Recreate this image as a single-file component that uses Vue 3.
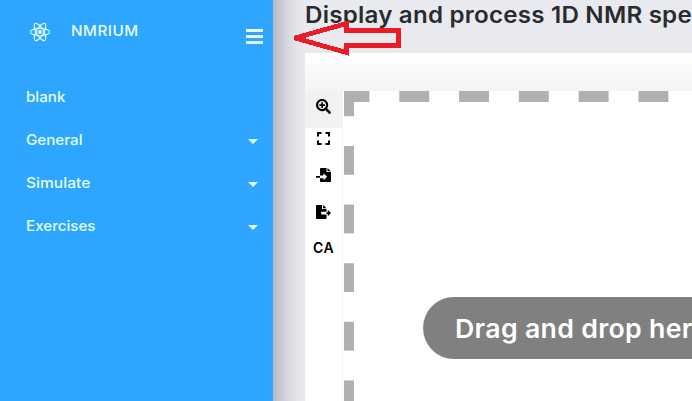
<script setup>
const menu = [
  { label: 'blank', key: 'blank', open: false },
  { label: 'General', key: 'general', open: true },
  { label: 'Simulate', key: 'simulate', open: true },
  { label: 'Exercises', key: 'exercises', open: true },
]
</script>

<template>
  <div class="page">
    <aside class="sidebar">
      <header class="brand">
        <svg class="logo" viewBox="0 0 22 20" fill="none" stroke="#dcfbff" stroke-width="1.15">
          <ellipse cx="11" cy="10" rx="9.7" ry="3.7" />
          <ellipse cx="11" cy="10" rx="9.7" ry="3.7" transform="rotate(60 11 10)" />
          <ellipse cx="11" cy="10" rx="9.7" ry="3.7" transform="rotate(120 11 10)" />
          <circle cx="11" cy="10" r="2" fill="#dcfbff" stroke="none" />
        </svg>
        <span class="name">NMRIUM</span>
        <span class="burger"><i></i><i></i><i></i></span>
      </header>
      <nav class="menu">
        <a v-for="m in menu" :key="m.key" class="item">
          <span class="label" :class="m.key">{{ m.label }}</span>
          <svg v-if="m.open" class="caret" viewBox="0 0 10 5"><path d="M0 0h10L5 5z" fill="#e6fdff" /></svg>
        </a>
      </nav>
    </aside>

    <main class="main">
      <h1 class="title">Display and process 1D NMR spe</h1>
      <section class="panel">
        <div class="bar"></div>
        <div class="work">
          <div class="tools">
            <span class="tool active">
              <svg width="15" height="15" viewBox="0 0 512 512"><path d="M304 192v32c0 6.6-5.4 12-12 12h-56v56c0 6.6-5.4 12-12 12h-32c-6.6 0-12-5.4-12-12v-56h-56c-6.6 0-12-5.4-12-12v-32c0-6.6 5.4-12 12-12h56v-56c0-6.6 5.4-12 12-12h32c6.6 0 12 5.4 12 12v56h56c6.6 0 12 5.4 12 12zm201 284.7L476.7 505c-9.4 9.4-24.6 9.4-33.9 0L343 405.3c-4.5-4.5-7-10.6-7-17V372c-35.3 27.6-79.7 44-128 44C93.1 416 0 322.9 0 208S93.1 0 208 0s208 93.1 208 208c0 48.3-16.4 92.7-44 128h16.3c6.4 0 12.5 2.5 17 7l99.7 99.7c9.3 9.4 9.3 24.6 0 34zM344 208c0-75.2-60.8-136-136-136S72 132.8 72 208s60.8 136 136 136 136-60.8 136-136z" /></svg>
            </span>
            <span class="tool expand">
              <svg width="13" height="13" viewBox="0 0 13 13"><path d="M0 4.5V.7Q0 0 .7 0H4.5V2H2V4.5zM8.5 0h3.8q.7 0 .7.7V4.5H11V2H8.5zM0 8.5H2V11H4.5v2H.7Q0 13 0 12.3zM11 8.5h2v3.8q0 .7-.7.7H8.5V11H11z" /></svg>
            </span>
            <span class="tool">
              <svg width="15" height="14" viewBox="0 0 15 14">
                <path d="M5 0h5.5v4H15v9.200q0 .8-.8.800H4.800Q4 14 4 13.200V10.200H7.500V12.300L11.200 8.700 7.500 5.200V7.500H4V1Q4 0 5 0zM11.500 0 15 3.300H11.500zM0 8h4v1.700H0z" />
                <path d="M4 8h4v1.700H4z" fill="#fff" />
              </svg>
            </span>
            <span class="tool">
              <svg width="15" height="14" viewBox="0 0 15 14">
                <path d="M.8 0H6v4h4.500v2.700H5.200v2.800h5.300v3.700q0 .8-.8.800H.8Q0 14 0 13.200V.8Q0 0 .8 0zM7 0l3.500 3.300H7zM10.500 7.300h1.300V4.900L15 8.100l-3.200 3.200V8.900h-1.300z" />
              </svg>
            </span>
            <span class="tool ca">CA</span>
          </div>
          <div class="drop">
            <div class="pill"><span class="pill-text">Drag and drop her</span></div>
          </div>
        </div>
      </section>
    </main>

    <svg class="arrow" viewBox="292 5 112 64"><path d="M295 38 346.500 23.500V30.500H398.700V45.300H346.500V52.500z" fill="none" stroke="#ed1c24" stroke-width="4.800" stroke-linejoin="miter" stroke-miterlimit="2" shape-rendering="crispEdges" /></svg>
  </div>
</template>

<style>
body { overflow: hidden; }
</style>

<style scoped>
.page {
  position: relative;
  display: flex;
  width: 692px;
  height: 401px;
  overflow: hidden;
  background: #e9eaef;
  font-family: Inter, "Liberation Sans", sans-serif;
}
.sidebar {
  flex: 0 0 273px;
  background: #2ea6ff;
  color: #e4fdff;
}
.brand {
  display: flex;
  align-items: flex-start;
  height: 76px;
  padding: 22px 10px 0 29px;
  box-sizing: border-box;
}
.logo { width: 22px; height: 20px; }
.name {
  margin: 0 auto 0 20px;
  font-size: 14.5px;
  line-height: 18px;
  font-weight: 550;
  letter-spacing: 0.5px;
  transform-origin: left;
  transform: scaleX(1.05);
}
.burger {
  display: flex;
  flex-direction: column;
  gap: 3px;
  padding-top: 7px;
}
.burger i { width: 17px; height: 3px; background: #e2faff; }
.menu { padding: 0 15px 0 26px; }
.item {
  display: flex;
  align-items: center;
  justify-content: space-between;
  height: 42.8px;
}
.label {
  margin-top: -1px;
  font-size: 14.5px;
  font-weight: 550;
  white-space: nowrap;
  transform-origin: left;
  transform: scaleX(1.045);
}
.simulate { transform: scaleX(1.075); }
.caret { width: 10px; height: 5px; margin-top: 3px; }
.main {
  flex: 1;
  min-width: 0;
  padding-left: 32px;
  background: linear-gradient(90deg, #b6b6bf 0, #c7c7cf 7px, #dadbe1 16px, #e6e7ec 26px, #e9eaef 34px);
}
.title {
  margin: 0;
  height: 53px;
  font-size: 22.5px;
  line-height: 30px;
  font-weight: 600;
  white-space: nowrap;
  color: #292b2e;
  letter-spacing: 0.2px;
  transform-origin: left;
  transform: scaleX(1.073);
}
.panel { background: #fff; height: 348px; display: flex; flex-direction: column; }
.bar { height: 38px; background: linear-gradient(#fff, #f4f4f4); }
.work { flex: 1; display: flex; }
.tools {
  width: 37px;
  display: flex;
  flex-direction: column;
  border-right: 1px solid #f3f3f3;
}
.tool {
  display: flex;
  align-items: center;
  justify-content: center;
  height: 36.5px;
}
.tool svg { display: block; }
.tool.active { height: 37px; padding-bottom: 6px; box-sizing: border-box; background: #f2f2f2; }
.tool.expand { height: 20px; margin-bottom: 9px; }
.ca { font-size: 14px; font-weight: 600; height: 34px; letter-spacing: 0.3px; }
.drop {
  flex: 1;
  min-width: 0;
  margin-left: 1px;
  padding: 206px 0 0 79px;
  background:
    linear-gradient(#b0b0b0, #b0b0b0) 0 0 / 25px 10.5px no-repeat,
    linear-gradient(#b0b0b0, #b0b0b0) 0 0 / 10px 25px no-repeat,
    linear-gradient(90deg, #b0b0b0 30px, transparent 30px) 55.3px 0 / 59.8px 10.5px repeat-x,
    linear-gradient(#b0b0b0 29px, transparent 29px) 0 55px / 10px 58.6px repeat-y,
    #fff;
}
.pill {
  height: 62px;
  width: 420px;
  padding-left: 32px;
  box-sizing: border-box;
  border-radius: 31px;
  background: #808080;
  color: #fff;
  font-size: 26px;
  line-height: 63px;
  font-weight: 600;
  white-space: nowrap;
  letter-spacing: 0.3px;
}
.pill-text {
  display: inline-block;
  transform-origin: left;
  transform: scaleX(1.027);
}
.arrow {
  position: absolute;
  left: 292px;
  top: 5px;
  width: 112px;
  height: 64px;
}
</style>
